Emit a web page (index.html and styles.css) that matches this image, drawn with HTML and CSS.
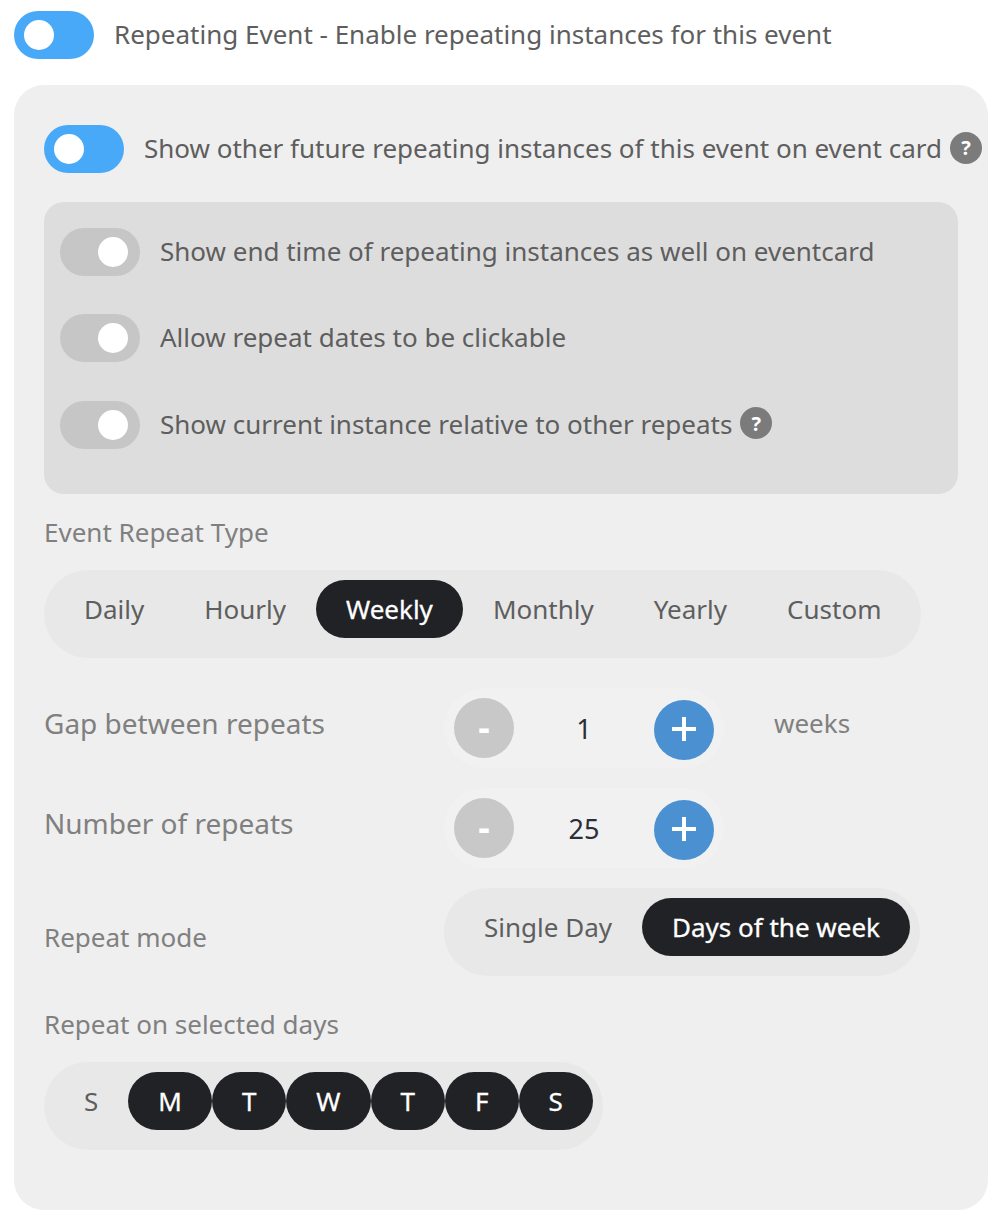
FILE: index.html
```html
<!DOCTYPE html>
<html lang="en">
<head>
    <meta charset="UTF-8">
    <title>Repeating Event</title>
    <link rel="stylesheet" href="styles.css">
</head>
<body>
<div class="page">
    <div class="toggle-row top-row">
        <span class="toggle on"><span class="knob"></span></span>
        <span class="toggle-label">Repeating Event - Enable repeating instances for this event</span>
    </div>

    <div class="panel">
        <div class="toggle-row future-row">
            <span class="toggle on"><span class="knob"></span></span>
            <span class="toggle-label">Show other future repeating instances of this event on event card</span>
            <span class="help">?</span>
        </div>

        <div class="subpanel">
            <div class="toggle-row sub-row">
                <span class="toggle off"><span class="knob"></span></span>
                <span class="toggle-label">Show end time of repeating instances as well on eventcard</span>
            </div>
            <div class="toggle-row sub-row">
                <span class="toggle off"><span class="knob"></span></span>
                <span class="toggle-label">Allow repeat dates to be clickable</span>
            </div>
            <div class="toggle-row sub-row">
                <span class="toggle off"><span class="knob"></span></span>
                <span class="toggle-label">Show current instance relative to other repeats</span>
                <span class="help">?</span>
            </div>
        </div>

        <p class="field-label type-label">Event Repeat Type</p>
        <div class="pills type-pills">
            <span class="pill">Daily</span>
            <span class="pill">Hourly</span>
            <span class="pill active">Weekly</span>
            <span class="pill">Monthly</span>
            <span class="pill">Yearly</span>
            <span class="pill">Custom</span>
        </div>

        <div class="stepper-row gap-row">
            <span class="stepper-label">Gap between repeats</span>
            <div class="stepper">
                <span class="step minus">-</span>
                <span class="step-value">1</span>
                <span class="step plus">
                    <svg width="24" height="24" viewBox="0 0 24 24"><path d="M12 0v24M0 12h24" stroke="#fff" stroke-width="4"/></svg>
                </span>
            </div>
            <span class="unit">weeks</span>
        </div>

        <div class="stepper-row count-row">
            <span class="stepper-label">Number of repeats</span>
            <div class="stepper">
                <span class="step minus">-</span>
                <span class="step-value">25</span>
                <span class="step plus">
                    <svg width="24" height="24" viewBox="0 0 24 24"><path d="M12 0v24M0 12h24" stroke="#fff" stroke-width="4"/></svg>
                </span>
            </div>
        </div>

        <div class="mode-row">
            <span class="field-label mode-label">Repeat mode</span>
            <div class="pills">
                <span class="pill">Single Day</span>
                <span class="pill active">Days of the week</span>
            </div>
        </div>

        <p class="field-label days-label">Repeat on selected days</p>
        <div class="pills days">
            <span class="pill">S</span>
            <span class="pill active">M</span>
            <span class="pill active">T</span>
            <span class="pill active">W</span>
            <span class="pill active">T</span>
            <span class="pill active">F</span>
            <span class="pill active">S</span>
        </div>
    </div>
</div>
</body>
</html>
```

FILE: styles.css
```css
* {
    box-sizing: border-box;
}

body {
    margin: 0;
    background-color: #fff;
    font-family: "Noto Sans", sans-serif;
    font-size: 26px;
    color: #5e5e5e;
}

.page {
    padding: 11px 18px 0 14px;
}

.toggle-row {
    display: flex;
    align-items: center;
}

.toggle {
    display: flex;
    align-items: center;
    flex: none;
    width: 80px;
    height: 48px;
    padding: 0 10px;
    border-radius: 24px;
}

.toggle.on {
    background-color: #48a9f8;
}

.toggle.off {
    justify-content: flex-end;
    padding: 0 12px;
    background-color: #c6c6c6;
}

.knob {
    width: 30px;
    height: 30px;
    border-radius: 50%;
    background-color: #fff;
}

.toggle-label {
    margin-left: 20px;
    padding-bottom: 2px;
    line-height: 46px;
    white-space: nowrap;
}

.help {
    display: flex;
    align-items: center;
    justify-content: center;
    flex: none;
    width: 32px;
    height: 32px;
    margin: 0 0 3px 8px;
    border-radius: 50%;
    background-color: #7b7b7b;
    color: #fff;
    font-size: 20px;
    font-weight: 700;
}

.panel {
    height: 1125px;
    margin-top: 26px;
    padding: 40px 30px 0;
    border-radius: 30px;
    background-color: #efefef;
}

.subpanel {
    height: 292px;
    margin-top: 29px;
    padding: 26px 16px 0;
    border-radius: 20px;
    background-color: #ddd;
}

.sub-row {
    margin-bottom: 38.4px;
}

.field-label {
    margin: 0;
    color: #808080;
    line-height: 36px;
}

.type-label {
    margin-top: 20px;
}

.pills {
    display: inline-flex;
    padding: 10px 10px 20px;
    border-radius: 44px;
    background-color: #e8e8e8;
}

.type-pills {
    display: flex;
    width: 877px;
    margin-top: 20px;
}

.pill {
    height: 58px;
    padding: 0 30px;
    border-radius: 29px;
    line-height: 58px;
    white-space: nowrap;
}

.pill.active {
    background-color: #212226;
    color: #fff;
    -webkit-text-stroke: 0.3px #fff;
}

.stepper-row {
    display: flex;
    align-items: flex-start;
    height: 80px;
}

.gap-row {
    margin-top: 30px;
}

.count-row {
    margin-top: 20px;
}

.stepper-label {
    width: 400px;
    color: #808080;
    font-size: 28px;
    line-height: 70px;
}

.stepper {
    display: flex;
    align-items: flex-start;
    width: 280px;
    height: 80px;
    padding: 10px;
    border-radius: 40px;
    background-color: #f1f1f1;
}

.step {
    display: flex;
    align-items: center;
    justify-content: center;
    flex: none;
    width: 60px;
    height: 60px;
    border-radius: 50%;
    color: #fff;
}

.minus {
    padding-bottom: 4px;
    background-color: #c8c8c8;
    font-size: 36px;
    font-weight: 700;
}

.plus {
    margin-top: 2px;
    background-color: #4b91d2;
}

.plus svg {
    margin-top: -2px;
}

.step-value {
    flex: 1;
    color: #2b2e36;
    font-size: 27px;
    text-align: center;
    line-height: 62px;
}

.unit {
    margin-left: 50px;
    color: #808080;
    line-height: 70px;
}

.mode-row {
    display: flex;
    margin-top: 20px;
}

.mode-label {
    width: 400px;
    padding-top: 31px;
}

.days-label {
    margin-top: 30px;
}

.days {
    margin-top: 20px;
}
```
